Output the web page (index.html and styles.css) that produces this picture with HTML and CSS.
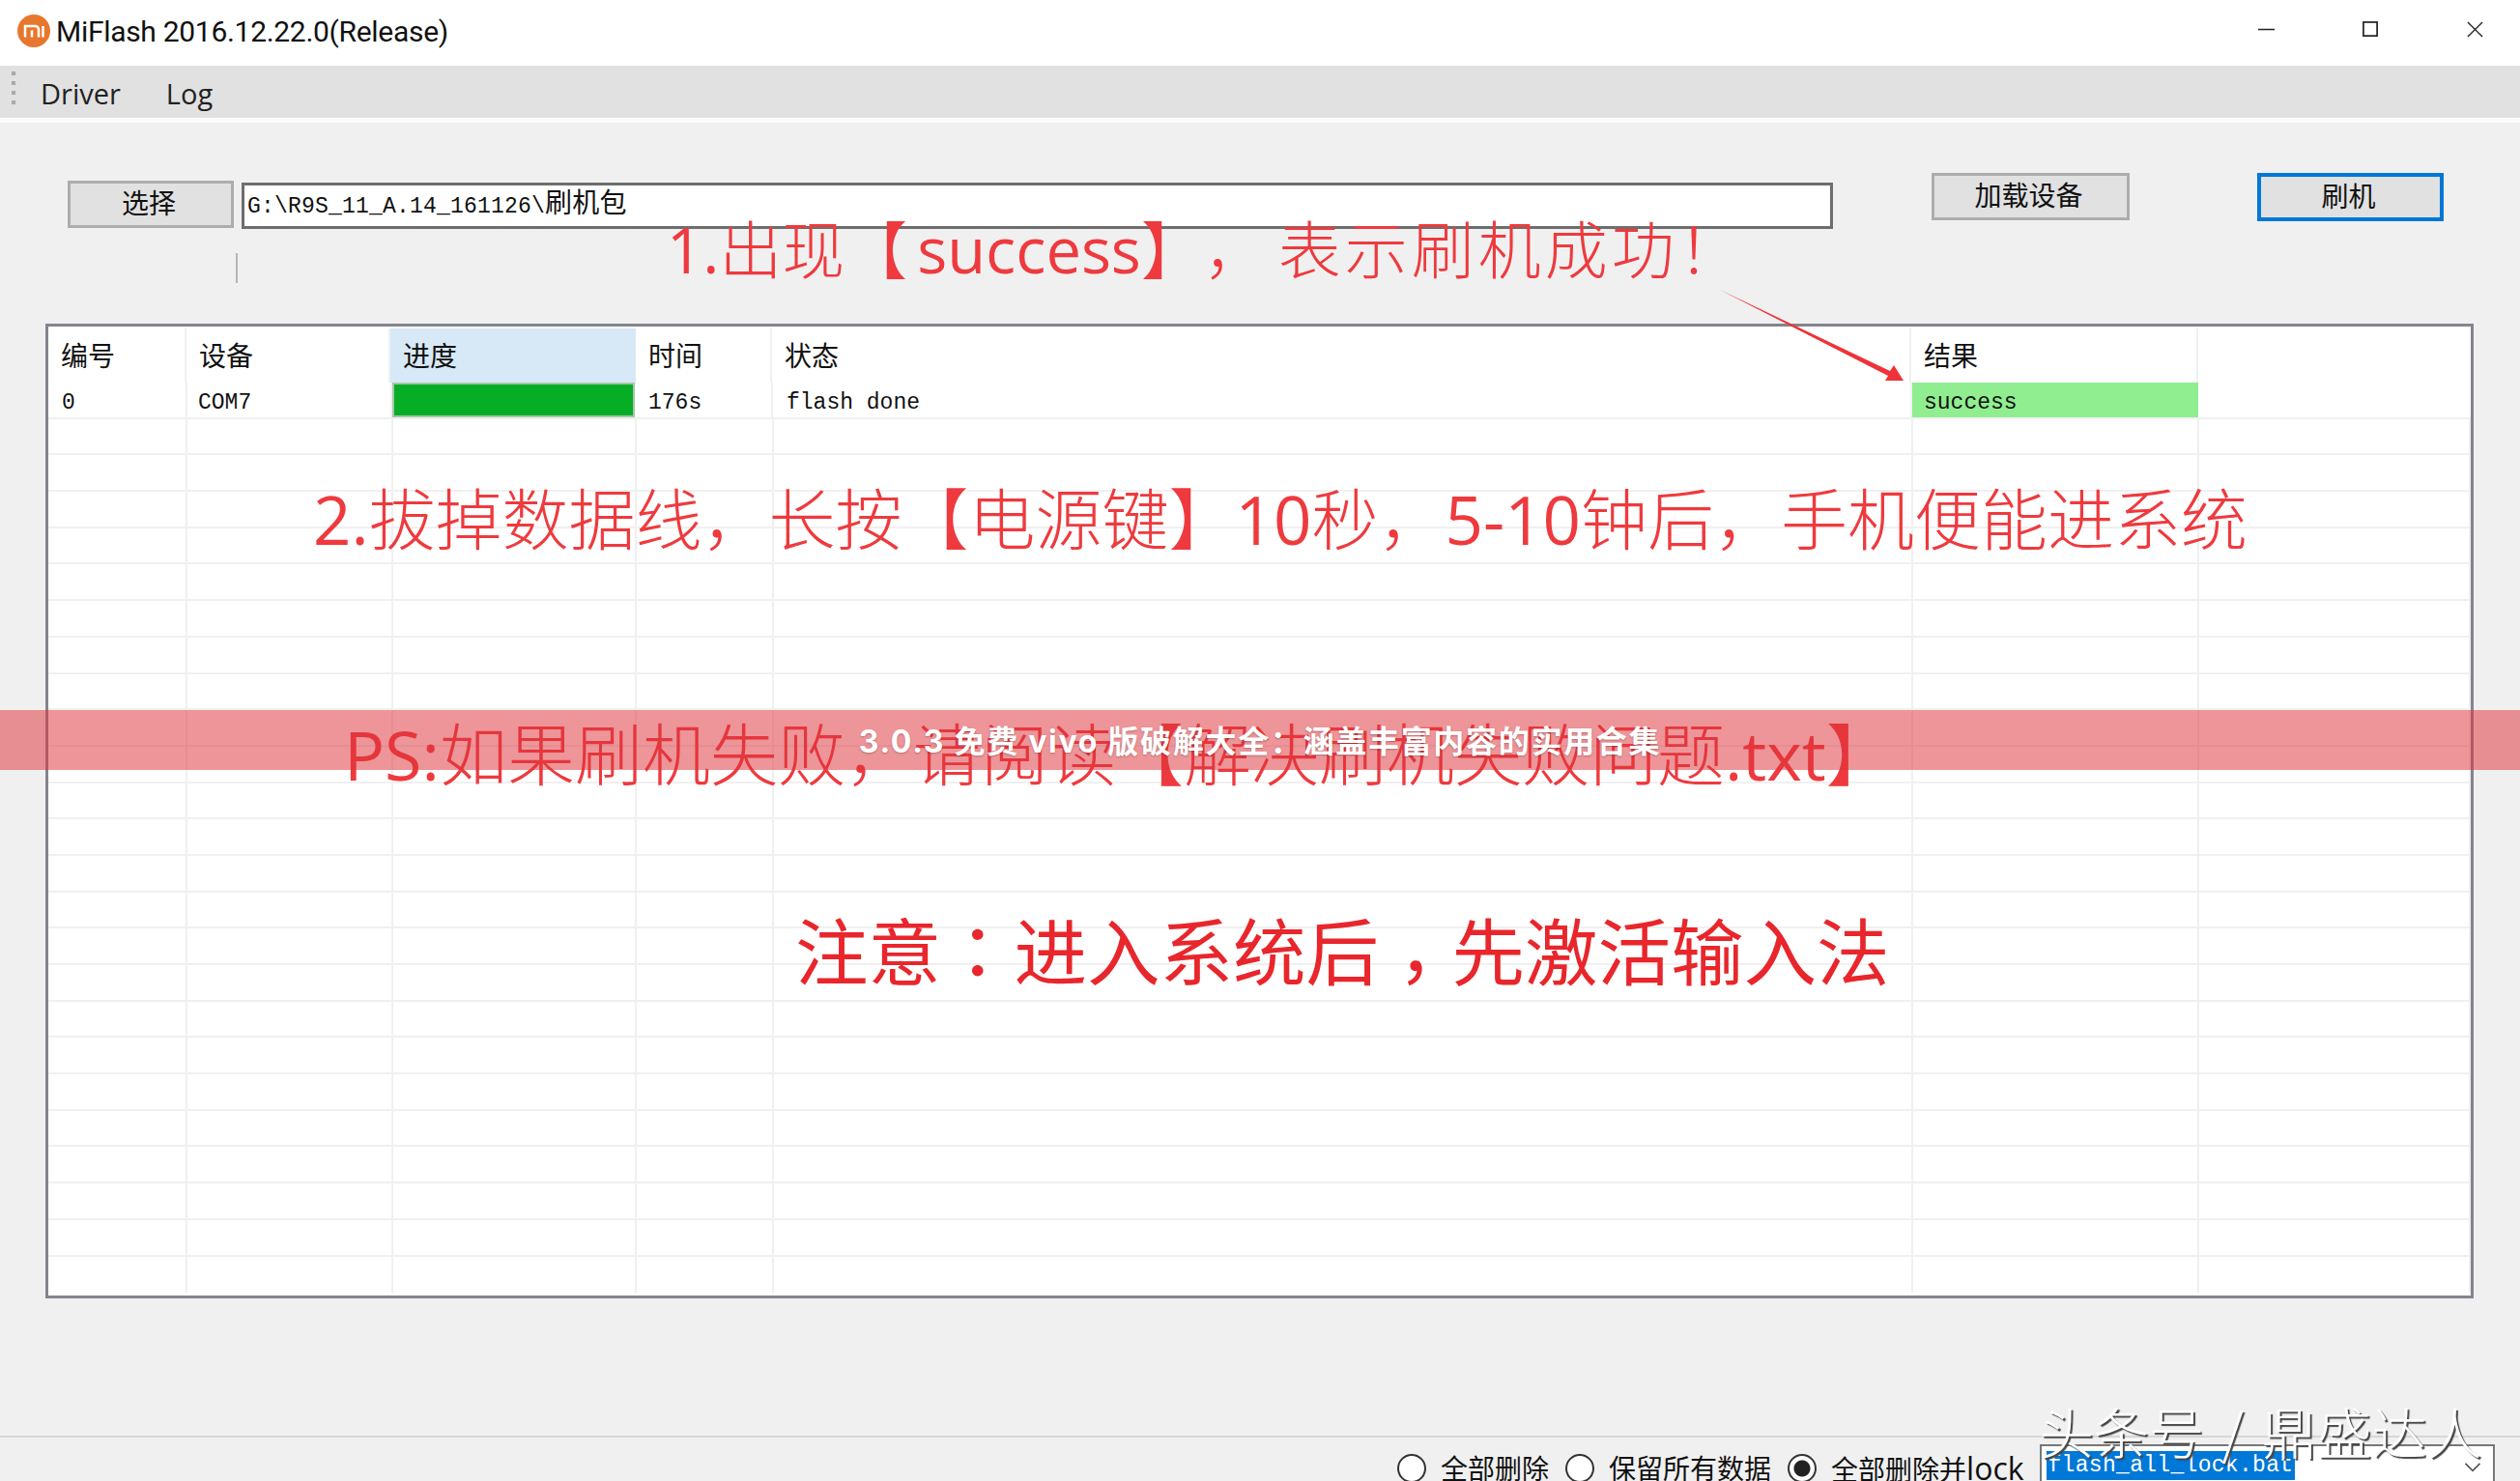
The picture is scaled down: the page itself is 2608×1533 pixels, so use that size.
FILE: index.html
```html
<!DOCTYPE html>
<html lang="zh-CN">
<head>
    <meta charset="UTF-8">
    <title>MiFlash 2016.12.22.0(Release)</title>
    <link rel="stylesheet" href="styles.css">
</head>
<body>
    <div class="titlebar">
        <svg class="logo" viewBox="0 0 36 36" aria-hidden="true">
            <circle cx="18" cy="18" r="17" fill="#e8772e"/>
            <path d="M9 24.5V13h10.5a3.5 3.5 0 0 1 3.5 3.5v8M16 17.5v7" fill="none" stroke="#fff" stroke-width="2.5"/>
            <path d="M27.5 13v11.5" fill="none" stroke="#fff" stroke-width="2.5"/>
        </svg>
        <span class="title">MiFlash 2016.12.22.0(Release)</span>
        <div class="window-buttons">
            <svg viewBox="0 0 18 18" aria-hidden="true"><path d="M0 9h18" stroke="#222" stroke-width="1.6"/></svg>
            <svg viewBox="0 0 18 18" aria-hidden="true"><rect x="1" y="1" width="15" height="15" fill="none" stroke="#222" stroke-width="1.8"/></svg>
            <svg viewBox="0 0 18 18" aria-hidden="true"><path d="M1 1l16 16M17 1L1 17" stroke="#222" stroke-width="1.4"/></svg>
        </div>
    </div>

    <div class="menubar">
        <div class="grip"><i></i><i></i><i></i><i></i></div>
        <span class="menu-item">Driver</span>
        <span class="menu-item">Log</span>
    </div>

    <div class="main">
        <div class="toolbar">
            <button class="btn btn-select">选择</button>
            <div class="path-input">G:\R9S_11_A.14_161126\<span class="cjk">刷机包</span></div>
            <button class="btn btn-load">加载设备</button>
            <button class="btn btn-flash">刷机</button>
        </div>
        <div class="tick"></div>

        <div class="grid">
            <div class="row row-head">
                <div>编号</div>
                <div>设备</div>
                <div class="sorted">进度</div>
                <div>时间</div>
                <div>状态</div>
                <div>结果</div>
                <div></div>
            </div>
            <div class="row row-data">
                <div>0</div>
                <div class="device">COM7</div>
                <div class="progress"></div>
                <div>176s</div>
                <div>flash done</div>
                <div class="result">success</div>
                <div></div>
            </div>
            <div class="row"><i></i><i></i><i></i><i></i><i></i><i></i><i></i></div>
            <div class="row"><i></i><i></i><i></i><i></i><i></i><i></i><i></i></div>
            <div class="row"><i></i><i></i><i></i><i></i><i></i><i></i><i></i></div>
            <div class="row"><i></i><i></i><i></i><i></i><i></i><i></i><i></i></div>
            <div class="row"><i></i><i></i><i></i><i></i><i></i><i></i><i></i></div>
            <div class="row"><i></i><i></i><i></i><i></i><i></i><i></i><i></i></div>
            <div class="row"><i></i><i></i><i></i><i></i><i></i><i></i><i></i></div>
            <div class="row"><i></i><i></i><i></i><i></i><i></i><i></i><i></i></div>
            <div class="row"><i></i><i></i><i></i><i></i><i></i><i></i><i></i></div>
            <div class="row"><i></i><i></i><i></i><i></i><i></i><i></i><i></i></div>
            <div class="row"><i></i><i></i><i></i><i></i><i></i><i></i><i></i></div>
            <div class="row"><i></i><i></i><i></i><i></i><i></i><i></i><i></i></div>
            <div class="row"><i></i><i></i><i></i><i></i><i></i><i></i><i></i></div>
            <div class="row"><i></i><i></i><i></i><i></i><i></i><i></i><i></i></div>
            <div class="row"><i></i><i></i><i></i><i></i><i></i><i></i><i></i></div>
            <div class="row"><i></i><i></i><i></i><i></i><i></i><i></i><i></i></div>
            <div class="row"><i></i><i></i><i></i><i></i><i></i><i></i><i></i></div>
            <div class="row"><i></i><i></i><i></i><i></i><i></i><i></i><i></i></div>
            <div class="row"><i></i><i></i><i></i><i></i><i></i><i></i><i></i></div>
            <div class="row"><i></i><i></i><i></i><i></i><i></i><i></i><i></i></div>
            <div class="row"><i></i><i></i><i></i><i></i><i></i><i></i><i></i></div>
            <div class="row"><i></i><i></i><i></i><i></i><i></i><i></i><i></i></div>
            <div class="row"><i></i><i></i><i></i><i></i><i></i><i></i><i></i></div>
            <div class="row row-last"><i></i><i></i><i></i><i></i><i></i><i></i><i></i></div>
        </div>
    </div>

    <div class="footer">
        <span class="radio"></span><span class="radio-label">全部删除</span>
        <span class="radio"></span><span class="radio-label">保留所有数据</span>
        <span class="radio checked"></span><span class="radio-label">全部删除并<span class="lock">lock</span></span>
        <div class="combo">
            <span class="combo-value">flash_all_lock.bat</span>
            <svg class="chevron" viewBox="0 0 20 12" aria-hidden="true"><path d="M1 1l9 9 9-9" fill="none" stroke="#555" stroke-width="2"/></svg>
        </div>
    </div>

    <!-- annotations pasted on top of the screenshot -->
    <div class="note note-1"><b>1.</b>出现【<b class="word">success</b>】，<span class="tail">表示刷机成功！</span></div>
    <svg class="arrow" viewBox="0 0 200 100" aria-hidden="true">
        <polygon points="0,0 176,84 180,78 190,94 171,94 174,89" fill="#ee3338"/>
    </svg>
    <div class="note note-2"><b>2.</b>拔掉数据线，长按【电源键】<b>10</b>秒，<b>5-10</b>钟后，手机便能进系统</div>
    <div class="note note-3"><b>PS:</b>如果刷机失败，请阅读【解决刷机失败问题<b>.txt</b>】</div>
    <div class="note note-4">注意<span class="mid" lang="zh-TW">：</span>进入系统后<span class="mid low" lang="zh-TW">，</span>先激活输入法</div>
    <div class="watermark">头条号 / 鼎盛达人</div>
    <div class="banner">3.0.3 免费 vivo 版破解大全：涵盖丰富内容的实用合集</div>
</body>
</html>
```

FILE: styles.css
```css
* {
    box-sizing: border-box;
}
html, body {
    height: 1533px;
}
body {
    margin: 0;
    position: relative;
    overflow: hidden;
    background: #f0f0f0;
    color: #111;
    font-family: "Open Sans", "Noto Sans CJK SC", sans-serif;
    text-spacing-trim: space-all;
}

/* title bar */
.titlebar {
    height: 68px;
    background: #fff;
    display: flex;
    align-items: center;
    padding: 0 38px 4px 17px;
}
.logo {
    width: 36px;
    height: 36px;
    margin-right: 5px;
}
.title {
    font-family: Roboto, sans-serif;
    font-size: 30px;
    letter-spacing: -0.3px;
    color: #111;
}
.window-buttons {
    margin: -3px 0 0 auto;
    display: flex;
    gap: 91px;
}
.window-buttons svg {
    width: 17px;
    height: 17px;
}

/* menu */
.menubar {
    height: 54px;
    background: #e1e1e1;
    display: flex;
    align-items: center;
    gap: 47px;
    padding: 2px 0 0 42px;
    position: relative;
}
.grip {
    position: absolute;
    left: 12px;
    top: 6px;
    display: flex;
    flex-direction: column;
    gap: 6px;
}
.grip i {
    display: block;
    width: 4px;
    height: 4px;
    background: #a9a9a9;
}
.menu-item {
    font-size: 29px;
    color: #222;
}

/* main panel */
.main {
    border-top: 5px solid #fbfbfb;
    height: 1364px;
    padding-top: 52px;
}
.toolbar {
    display: flex;
    align-items: flex-start;
    padding-left: 70px;
    height: 83px;
}
.btn {
    font-family: "Noto Sans CJK SC", sans-serif;
    font-size: 28px;
    line-height: 1;
    color: #111;
    background: #e1e1e1;
    border: 3px solid #adadad;
    padding: 0 4px 5px 0;
}
.btn-select {
    width: 172px;
    height: 49px;
    margin-top: 8px;
}
.path-input {
    width: 1647px;
    height: 48px;
    margin: 10px 102px 0 8px;
    background: #fff;
    border: 3px solid #6e6e6e;
    padding-left: 3px;
    font-family: "Liberation Mono", monospace;
    font-size: 23px;
    letter-spacing: 0.2px;
    line-height: 33px;
}
.cjk {
    font-family: "Noto Sans CJK SC", sans-serif;
    font-size: 28px;
}
.btn-load {
    width: 205px;
    height: 49px;
    margin-right: 132px;
}
.btn-flash {
    width: 193px;
    height: 50px;
    border: 4px solid #0078d7;
}
.tick {
    width: 2px;
    height: 31px;
    margin: 0 0 42px 244px;
    background: #b5b5b5;
}

/* data grid */
.grid {
    width: 2513px;
    height: 1009px;
    margin-left: 47px;
    background: #fff;
    border: 3px solid #84848e;
    padding: 2px 0 0 0;
    overflow: hidden;
}
.row {
    display: grid;
    grid-template-columns: 144px 213px 252px 142px 1179px 296px 1fr;
    grid-template-rows: minmax(0, 1fr);
    height: 37.7px;
    border-bottom: 2px solid #f0f0f0;
}
.row i {
    border-right: 2px solid #f0f0f0;
}
.row-last {
    border-bottom: 0;
}
.row-head {
    height: 56px;
    grid-template-columns: 143px 211px 254px 141px 1179px 297px 1fr;
    border-bottom: 0;
    font-family: "Noto Sans CJK SC", sans-serif;
    font-size: 28px;
    line-height: 55px;
}
.row-head div {
    padding-left: 13px;
    border-right: 2px solid #f0f0f0;
}
.row-head .sorted {
    background: #d7e8f6;
    border-right: 0;
}
.row-head div:last-child {
    border-right: 0;
}
.row-data {
    grid-template-columns: 144px 212px 251px 143px 1179px 296px 1fr;
    font-family: "Liberation Mono", monospace;
    font-size: 23px;
    line-height: 28px;
}
.row-data div {
    padding: 7px 0 0 14px;
    border-right: 2px solid #f0f0f0;
}
.row-data div:last-child {
    border-right: 0;
}
.row-data .device {
    padding-left: 11px;
}
.row-data .progress {
    background: #06ae25;
    border: 2px solid #a6c4a8;
}
.row-data .result {
    background: #90ee90;
    border-right: 0;
    padding: 7px 0 0 12px;
}

/* bottom options */
.footer {
    height: 47px;
    border-top: 2px solid #d6d6d6;
    display: flex;
    align-items: flex-start;
    padding: 15px 0 0 1446px;
    font-family: "Open Sans", "Noto Sans CJK SC", sans-serif;
    font-size: 28px;
    line-height: 34px;
    white-space: nowrap;
}
.radio {
    width: 30px;
    height: 30px;
    margin: 2px 15px 0 0;
    flex: none;
    border: 2px solid #333;
    border-radius: 50%;
    background: #fff;
}
.radio.checked {
    background: radial-gradient(circle, #222 0 8px, #fff 9px);
}
.radio-label {
    margin-right: 17px;
}
.lock {
    font-size: 32px;
}
.combo {
    flex: none;
    width: 471px;
    height: 50px;
    margin: -8px 0 0 -1px;
    background: #fff;
    border: 2px solid #777;
    padding: 5px 0 0 5px;
    position: relative;
}
.combo-value {
    display: block;
    width: fit-content;
    height: 30px;
    padding: 0 2px;
    background: #0078d7;
    color: #fff;
    font-family: "Liberation Mono", monospace;
    font-size: 23px;
    line-height: 30px;
    letter-spacing: 0.3px;
}
.chevron {
    position: absolute;
    right: 12px;
    top: 17px;
    width: 18px;
    height: 10px;
}

/* overlays */
.note {
    position: absolute;
    white-space: nowrap;
    color: #ee3a3e;
    font-family: "Open Sans", "Noto Sans CJK SC", sans-serif;
    font-weight: 300;
    line-height: 1;
}
.note b {
    font-weight: 500;
}
.note-1 {
    left: 690px;
    top: 226px;
    font-size: 65px;
}
.note-1 .word {
    margin-left: 10px;
}
.note-1 .tail {
    margin-left: 12px;
    letter-spacing: 4px;
}
.note-2 {
    left: 324px;
    top: 503px;
    font-size: 69px;
}
.note-3 {
    left: 356px;
    top: 746px;
    font-size: 70px;
}
.note-4 {
    left: 823px;
    top: 944px;
    font-size: 75.5px;
    font-weight: 400;
    color: #e8262c;
    font-family: "Noto Sans CJK SC", sans-serif;
}
.note-4 .mid {
    font-family: "Noto Sans CJK TC", sans-serif;
}
.note-4 .low {
    position: relative;
    top: 20px;
}
.arrow {
    position: absolute;
    left: 1780px;
    top: 300px;
    width: 200px;
    height: 100px;
}
.watermark {
    position: absolute;
    left: 2110px;
    top: 1446px;
    font-family: "Noto Sans CJK SC", sans-serif;
    font-weight: 300;
    font-size: 57px;
    word-spacing: 6px;
    line-height: 1.2;
    white-space: nowrap;
    color: #fff;
    text-shadow: 2px 2px 1px #444;
}
.banner {
    position: absolute;
    left: 0;
    right: 0;
    top: 735px;
    height: 62px;
    background: rgba(221, 51, 59, 0.52);
    color: #fff;
    text-align: center;
    font-family: Inter, "Noto Sans CJK SC", sans-serif;
    font-weight: 700;
    font-size: 32px;
    line-height: 66px;
    letter-spacing: 1.7px;
    text-shadow: 0 1px 2px rgba(0, 0, 0, 0.25);
}
```
